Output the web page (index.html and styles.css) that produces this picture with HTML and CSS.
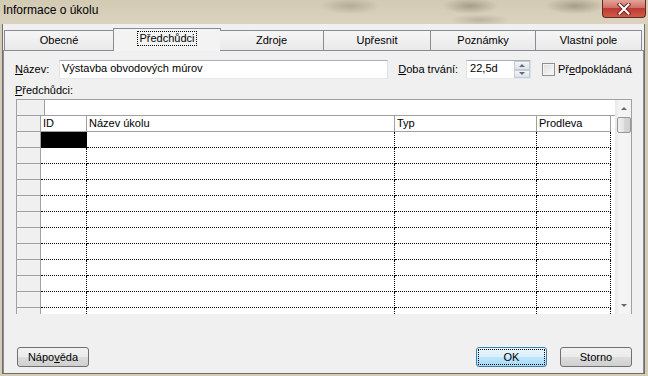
FILE: index.html
```html
<!DOCTYPE html>
<html lang="cs">
<head>
    <meta charset="UTF-8">
    <meta name="viewport" content="width=device-width, initial-scale=1.0">
    <title>Informace o úkolu</title>
    <link rel="stylesheet" href="styles.css">
</head>
<body>
<div class="window">
    <div class="titlebar">
        <span class="title">Informace o úkolu</span>
        <div class="close">
            <svg width="14" height="12" viewBox="0 0 14 12">
                <path d="M2.5 1.5 L11.5 10.5 M11.5 1.5 L2.5 10.5" stroke="#6b2323" stroke-width="4" stroke-linecap="square"/>
                <path d="M2.5 1.5 L11.5 10.5 M11.5 1.5 L2.5 10.5" stroke="#fff" stroke-width="2" stroke-linecap="square"/>
            </svg>
        </div>
    </div>
    <div class="client">
        <div class="tabs">
            <div class="tab t1">Obecné</div>
            <div class="tab t2 active"><span class="focus">Předchůdci</span></div>
            <div class="tab t3">Zdroje</div>
            <div class="tab t4">Upřesnit</div>
            <div class="tab t5">Poznámky</div>
            <div class="tab t6">Vlastní pole</div>
        </div>
        <div class="panel">
            <div class="fields">
                <span class="lbl name-lbl"><u>N</u>ázev:</span>
                <div class="textbox name-box">Výstavba obvodových múrov</div>
                <span class="lbl dur-lbl"><u>D</u>oba trvání:</span>
                <div class="textbox dur-box">
                    <span>22,5d</span>
                    <div class="spin">
                        <span class="spin-btn"><i class="arr-up"></i></span>
                        <span class="spin-btn"><i class="arr-down"></i></span>
                    </div>
                </div>
                <span class="checkbox"></span>
                <span class="lbl check-lbl">Př<u>e</u>dpokládaná</span>
            </div>
            <div class="lbl sub-lbl"><u>P</u>ředchůdci:</div>

            <div class="grid">
                <div class="sheet">
                    <div class="editrow"><span class="editcell"></span></div>
                    <div class="cells">
                        <div class="rh"></div><div class="hd">ID</div><div class="hd">Název úkolu</div><div class="hd">Typ</div><div class="hd">Prodleva</div>

                        <div class="rh"></div><div class="c sel"></div><div class="c"></div><div class="c"></div><div class="c"></div>
                        <div class="rh"></div><div class="c"></div><div class="c"></div><div class="c"></div><div class="c"></div>
                        <div class="rh"></div><div class="c"></div><div class="c"></div><div class="c"></div><div class="c"></div>
                        <div class="rh"></div><div class="c"></div><div class="c"></div><div class="c"></div><div class="c"></div>
                        <div class="rh"></div><div class="c"></div><div class="c"></div><div class="c"></div><div class="c"></div>
                        <div class="rh"></div><div class="c"></div><div class="c"></div><div class="c"></div><div class="c"></div>
                        <div class="rh"></div><div class="c"></div><div class="c"></div><div class="c"></div><div class="c"></div>
                        <div class="rh"></div><div class="c"></div><div class="c"></div><div class="c"></div><div class="c"></div>
                        <div class="rh"></div><div class="c"></div><div class="c"></div><div class="c"></div><div class="c"></div>
                        <div class="rh"></div><div class="c"></div><div class="c"></div><div class="c"></div><div class="c"></div>
                        <div class="rh"></div><div class="c"></div><div class="c"></div><div class="c"></div><div class="c"></div>
                        <div class="rh"></div><div class="c"></div><div class="c"></div><div class="c"></div><div class="c"></div>
                    </div>
                </div>
                <div class="scrollbar">
                    <div class="sb-btn"><i class="arr-up"></i></div>
                    <div class="sb-thumb"></div>
                    <div class="sb-track"></div>
                    <div class="sb-btn"><i class="arr-down"></i></div>
                </div>
            </div>

            <div class="buttons">
                <div class="btn help">Nápo<u>v</u>ěda</div>
                <div class="btn ok"><span class="focus">OK</span></div>
                <div class="btn cancel">Storno</div>
            </div>
        </div>
    </div>
</div>
</body>
</html>
```

FILE: styles.css
```css
body {
    margin: 0;
    font-family: "Liberation Sans", Arial, sans-serif;
    font-size: 11px;
    color: #000;
}

.window {
    width: 648px;
    height: 376px;
    background: #d5ccb6;
    display: flex;
    flex-direction: column;
    overflow: hidden;
}

/* title bar, blurred aero glass */
.titlebar {
    height: 24px;
    flex: none;
    display: flex;
    align-items: flex-start;
    background:
        radial-gradient(ellipse 30px 8px at 350px 6px, rgba(120, 110, 90, .35), transparent),
        radial-gradient(ellipse 28px 8px at 470px 6px, rgba(110, 100, 80, .45), transparent),
        radial-gradient(ellipse 30px 8px at 575px 6px, rgba(110, 100, 80, .45), transparent),
        radial-gradient(ellipse 30px 6px at 480px 20px, rgba(120, 110, 90, .3), transparent),
        linear-gradient(#d3cab3, #dbd3bf);
}

.title {
    font-size: 12px;
    line-height: 15px;
    padding: 3px 0 0 3px;
}

.close {
    margin: 0 2px 0 auto;
    width: 44px;
    height: 18px;
    box-sizing: border-box;
    border: 1px solid #5e2b27;
    border-top: none;
    border-radius: 0 0 4px 4px;
    background: linear-gradient(#e3a496 0%, #d1706a 45%, #c0392f 50%, #cf5a48 100%);
    display: flex;
    align-items: center;
    justify-content: center;
}

.client {
    flex: 1;
    margin: 0 3px 2px 2px;
    border: 1px solid #6f6f6f;
    border-top: none;
    background: #f0f0f0;
    padding-top: 6px;
    display: flex;
    flex-direction: column;
}

/* tabs */
.tabs {
    display: flex;
    height: 20px;
    margin-left: 1px;
    position: relative;
    z-index: 1;
}

.tab {
    box-sizing: border-box;
    height: 20px;
    border: 1px solid #898c95;
    border-bottom: none;
    border-right: none;
    background: linear-gradient(#f6f6f6, #e9e9e9);
    display: flex;
    align-items: center;
    justify-content: center;
    line-height: 13px;
}

.t1 { width: 109px; }
.t2 { width: 108px; }
.t3 { width: 103px; }
.t4 { width: 107px; }
.t5 { width: 105px; }
.t6 { width: 107px; border-right: 1px solid #898c95; }

.tab.active {
    height: 23px;
    margin-top: -2px;
    border-right: 1px solid #898c95;
    margin-right: -1px;
    background: #f3f3f3;
    padding-bottom: 3px;
}

.tab.active + .tab {
    border-left: none;
}

.focus {
    outline: 1px dotted #000;
    padding: 0 1px;
}

.panel {
    flex: 1;
    border: 1px solid #898c95;
    border-bottom: none;
    background: #f0f0f0;
    padding: 9px 11px 6px 11px;
    display: flex;
    flex-direction: column;
}

/* top fields */
.fields {
    display: flex;
    align-items: center;
    height: 19px;
}

.lbl {
    line-height: 15px;
    white-space: nowrap;
}

.name-lbl { width: 44px; }

.textbox {
    box-sizing: border-box;
    height: 19px;
    border: 1px solid;
    border-color: #abadb3 #dbdfe6 #e3e9ef #e2e3ea;
    background: #fff;
    padding-left: 2px;
    line-height: 15px;
}

.name-box { width: 330px; }

.dur-lbl {
    margin-left: 10px;
    width: 68px;
}

.dur-box {
    width: 65px;
    display: flex;
    padding-left: 3px;
}

.spin {
    margin-left: auto;
    width: 16px;
    display: flex;
    flex-direction: column;
}

.spin-btn {
    flex: 1;
    box-sizing: border-box;
    border: 1px solid #c4cbd4;
    background: linear-gradient(#f4f6f8, #dde3ea);
    display: flex;
    align-items: center;
    justify-content: center;
}

.arr-up, .arr-down {
    width: 0;
    height: 0;
    border-left: 3px solid transparent;
    border-right: 3px solid transparent;
}

.arr-up { border-bottom: 3px solid #5d6b7c; }
.arr-down { border-top: 3px solid #5d6b7c; }

.checkbox {
    margin-left: 11px;
    width: 13px;
    height: 13px;
    box-sizing: border-box;
    border: 1px solid #8e8f8f;
    background: linear-gradient(135deg, #dcdcdc, #fafafa);
    box-shadow: inset 0 0 0 1px #f4f4f4;
}

.check-lbl { margin-left: 3px; }

.sub-lbl {
    margin-top: 4px;
    height: 15px;
}

/* predecessors grid */
.grid {
    margin: 1px 0 0 1px;
    height: 215px;
    box-sizing: border-box;
    border: 1px solid #a0a0a0;
    border-bottom: none;
    display: flex;
}

.sheet {
    flex: 1;
    background: #fff;
    overflow: hidden;
}

.editrow {
    height: 16px;
    box-sizing: border-box;
    border-bottom: 1px solid #a0a0a0;
    display: flex;
}

.editcell {
    width: 28px;
    box-sizing: border-box;
    border-right: 1px solid #a0a0a0;
    background: #f0f0f0;
}

.cells {
    display: grid;
    grid-template-columns: 24px 46px 308px 142px 74px;
    grid-auto-rows: 16px;
}

.cells > div {
    box-sizing: border-box;
}

.rh {
    background: #f0f0f0;
    border-right: 1px solid #a0a0a0;
    border-bottom: 1px solid #a0a0a0;
}

.hd {
    border-right: 1px solid #a0a0a0;
    border-bottom: 1px solid #a0a0a0;
    padding-left: 2px;
    line-height: 15px;
}

.c {
    border-right: 1px dotted #000;
    border-bottom: 1px dotted #000;
}

.c.sel {
    background: #000;
}

.scrollbar {
    width: 16px;
    background: linear-gradient(90deg, #e8e8e8, #f5f5f5 30%, #f3f3f3);
    display: flex;
    flex-direction: column;
}

.sb-btn {
    height: 17px;
    display: flex;
    align-items: center;
    justify-content: center;
    padding-left: 1px;
}

.sb-thumb {
    height: 16px;
    margin-left: 2px;
    box-sizing: border-box;
    border: 1px solid #979797;
    border-radius: 2px;
    background: linear-gradient(90deg, #f1f1f1, #e2e2e2 50%, #d6d6d6 51%, #cfcfcf);
}

.sb-track {
    flex: 1;
}

/* bottom buttons */
.buttons {
    margin-top: auto;
    display: flex;
    height: 20px;
}

.btn {
    width: 72px;
    height: 20px;
    box-sizing: border-box;
    border: 1px solid #707070;
    border-radius: 3px;
    background: linear-gradient(#f2f2f2 0%, #ebebeb 50%, #dddddd 51%, #cfcfcf 100%);
    display: flex;
    align-items: center;
    justify-content: center;
    line-height: 13px;
}

.help { margin-left: 2px; }

.ok {
    width: 71px;
    margin-left: auto;
    border-color: #3c7fb1;
    background: linear-gradient(#eaf6fd 0%, #d9f0fc 50%, #bee6fd 51%, #a7d9f5 100%);
    padding: 2px;
}

.ok .focus {
    flex: 1;
    align-self: stretch;
    display: flex;
    align-items: center;
    justify-content: center;
    outline-offset: 0;
}

.cancel { margin-left: 13px; }
```
